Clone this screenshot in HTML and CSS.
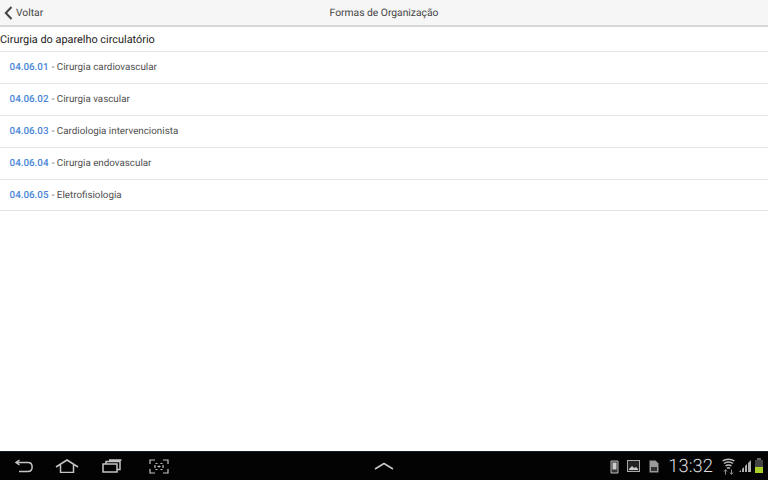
FILE: index.html
```html
<!DOCTYPE html>
<html lang="pt">
<head>
<meta charset="utf-8">
<title>Formas de Organização</title>
<link rel="stylesheet" href="styles.css">
</head>
<body>
<div class="screen">
  <header class="topbar">
    <a class="back">
      <svg class="back-icon" width="9" height="14" viewBox="0 0 9 14"><path d="M7.500 1 L1.800 7 L7.500 13" fill="none" stroke="#444" stroke-width="2"/></svg>
      <span>Voltar</span>
    </a>
    <h1 class="title">Formas de Organização</h1>
  </header>
  <main class="content">
    <h2 class="section">Cirurgia do aparelho circulatório</h2>
    <ul class="list">
      <li class="item"><span class="code">04.06.01</span> - Cirurgia cardiovascular</li>
      <li class="item"><span class="code">04.06.02</span> - Cirurgia vascular</li>
      <li class="item"><span class="code">04.06.03</span> - Cardiologia intervencionista</li>
      <li class="item"><span class="code">04.06.04</span> - Cirurgia endovascular</li>
      <li class="item"><span class="code">04.06.05</span> - Eletrofisiologia</li>
    </ul>
  </main>
  <footer class="navbar">
    <div class="nav-left">
      <svg width="20" height="14" viewBox="0 0 20 14"><path d="M2 3.500H14C19.500 3.500 19.500 12.500 14 12.500H5M5.500 1L2 3.500L5.500 6" fill="none" stroke="#c4c4c4" stroke-width="1.500"/></svg>
      <svg class="home" width="24" height="14" viewBox="0 0 24 14"><path d="M1 8L12 1L23 8M5.500 6V13.500H18.500V6" fill="none" stroke="#c4c4c4" stroke-width="1.500"/></svg>
      <svg class="recent" width="20" height="14" viewBox="0 0 20 14"><path d="M1 5H15V13H1ZM4 5V2.500H18V10.500H15M7 1H19.500" fill="none" stroke="#c4c4c4" stroke-width="1.500"/></svg>
      <svg class="shot" width="20" height="15" viewBox="0 0 20 15"><path d="M6 1H1V5M14 1H19V5M1 10V14H6M19 10V14H14M6.500 4.500H8.500M11.500 4.500H13.500M6.500 10.500H8.500M11.500 10.500H13.500M6 6V9M14 6V9M10 6.500V8.500M8.500 7.500H11.500" fill="none" stroke="#c4c4c4" stroke-width="1.200"/></svg>
    </div>
    <svg class="nav-up" width="20" height="8" viewBox="0 0 20 8"><path d="M1 7L10 1.500L19 7" fill="none" stroke="#c8c8c8" stroke-width="1.500"/></svg>
    <div class="nav-right">
      <svg class="st-icon" width="9" height="14" viewBox="0 0 9 14"><path d="M1 1H8V13H1Z" fill="#333" stroke="#bbb"/><rect x="2.500" y="2.500" width="4" height="7" fill="#ccc"/></svg>
      <svg class="st-icon gap-a" width="13" height="12" viewBox="0 0 13 12"><rect x=".5" y=".5" width="12" height="11" fill="#222" stroke="#aaa"/><path d="M2 9L5 6L7 8L9 7L11 9V10H2Z" fill="#ccc"/></svg>
      <svg class="st-icon gap-b" width="10" height="13" viewBox="0 0 10 13"><path d="M.5.5H6.500L9.500 3.500V12.500H.5Z" fill="#999"/><rect x="2" y="7" width="6" height="4" fill="#333"/></svg>
      <span class="clock">13:32</span>
      <svg class="wifi" width="13" height="17" viewBox="0 0 13 17"><path d="M.5 3C4 .5 9 .5 12.500 3M2 5.500C4.500 3.500 8.500 3.500 11 5.500M3.500 8C5 6.800 8 6.800 9.500 8M5 10.300C6 9.500 7 9.500 8 10.300" fill="none" stroke="#bdbdbd" stroke-width="1.500"/><path d="M3.500 16.500V12M2 13.500L3.500 11.500L5 13.500M9.500 11.500V16M8 14.500L9.500 16.500L11 14.500" fill="none" stroke="#8f8f8f"/></svg>
      <svg class="signal" width="12" height="12" viewBox="0 0 12 12"><path d="M0 12L2 10V12ZM3 9L5 7V12H3ZM6 6L8 4V12H6ZM9 3L12 0V12H9Z" fill="#b0b0b0"/></svg>
      <svg class="battery" width="8" height="15" viewBox="0 0 8 15"><rect x="2" y="0" width="4" height="2" fill="#666"/><rect y="2" width="8" height="7" fill="#444"/><rect y="9" width="8" height="6" fill="#a9cf2a"/></svg>
    </div>
  </footer>
</div>
</body>
</html>
```

FILE: styles.css
```css
html, body {
  margin: 0;
  padding: 0;
}

.screen {
  width: 768px;
  height: 480px;
  display: flex;
  flex-direction: column;
  overflow: hidden;
  background: #fff;
  font-family: Roboto, "Liberation Sans", sans-serif;
  text-rendering: geometricPrecision;
}

.topbar {
  height: 25px;
  flex: none;
  display: flex;
  align-items: center;
  justify-content: center;
  position: relative;
  background: #f6f6f6;
  border-bottom: 2px solid #d6d6d6;
}

.back {
  position: absolute;
  left: 4px;
  top: 6px;
  display: flex;
  align-items: center;
  gap: 3px;
  font-size: 10.3px;
  line-height: 14px;
  color: #444;
}

.back-icon {
  display: block;
}

.title {
  margin: 0;
  font-size: 10.3px;
  font-weight: 400;
  color: #444;
}

.content {
  flex: 1;
}

.section {
  margin: 0;
  height: 23px;
  padding-top: 1px;
  line-height: 24px;
  font-size: 10.9px;
  font-weight: 400;
  color: #222;
  border-bottom: 1px solid #e4e4e4;
}

.list {
  margin: 0;
  padding: 0;
  list-style: none;
}

.item {
  height: 31px;
  line-height: 31px;
  padding-left: 9.600px;
  font-size: 9.800px;
  color: #4f4f4f;
  border-bottom: 1px solid #e4e4e4;
}

.item:last-child {
  height: 30px;
}

.code {
  margin-right: 0.800px;
  color: #4a86d8;
  font-weight: 500;
}

.navbar {
  height: 28px;
  flex: none;
  display: flex;
  align-items: center;
  position: relative;
  background: #030303;
  border-top: 1px solid #12222a;
}

.nav-left {
  display: flex;
  align-items: center;
  padding-left: 14px;
}

.home {
  margin-left: 21px;
}

.recent {
  margin-left: 23px;
}

.shot {
  margin-left: 27px;
}

.nav-up {
  position: absolute;
  left: 374px;
  top: 10px;
}

.nav-right {
  position: absolute;
  right: 5px;
  top: 6px;
  display: flex;
  align-items: flex-start;
}

.st-icon {
  margin-top: 2px;
}

.gap-a {
  margin-left: 8px;
}

.gap-b {
  margin-left: 9px;
}

.clock {
  margin-left: 9px;
  font-size: 18.400px;
  font-weight: 300;
  line-height: 18px;
  color: #dcdcdc;
}

.wifi {
  margin-left: 9px;
}

.signal {
  margin-top: 2px;
  margin-left: 4px;
}

.battery {
  margin-left: 4px;
}
```
